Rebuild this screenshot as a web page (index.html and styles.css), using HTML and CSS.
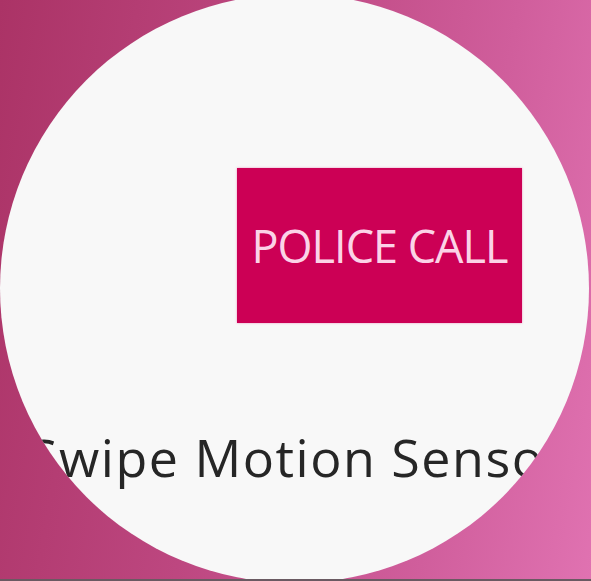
FILE: index.html
```html
<!DOCTYPE html>
<html lang="en">
<head>
<meta charset="utf-8">
<title>Police Call</title>
<link rel="stylesheet" href="styles.css">
</head>
<body>
<div class="screen">
  <div class="stage">
    <div class="dial">
      <div class="btn">POLICE CALL</div>
      <div class="label">Swipe Motion Sensor</div>
    </div>
  </div>
  <div class="strip"></div>
</div>
</body>
</html>
```
FILE: styles.css
```css
html, body {
  margin: 0;
  padding: 0;
  background: #b63f74;
}
.screen {
  width: 591px;
  height: 581px;
  display: flex;
  flex-direction: column;
  overflow: hidden;
  background: linear-gradient(100deg, #ab3366 0%, #bd4780 40%, #d05e9c 75%, #e072b1 100%);
}
.stage {
  height: 579px;
  overflow: hidden;
  flex: none;
}
.strip {
  height: 2px;
  background: #6a5a62;
  flex: none;
}
.dial {
  width: 589px;
  height: 589px;
  margin-top: -6px;
  border-radius: 50%;
  background: #f8f8f8;
  overflow: hidden;
  display: flex;
  flex-direction: column;
  padding-top: 174px;
  box-sizing: border-box;
}
.btn {
  margin-left: 237px;
  width: 285px;
  height: 155px;
  background: #cc0055;
  box-shadow: 0 0 2px rgba(230, 80, 150, 0.6);
  color: #fbd3e7;
  font-family: "Open Sans", sans-serif;
  font-size: 45px;
  letter-spacing: -1px;
  display: flex;
  align-items: center;
  justify-content: center;
  flex: none;
}
.label {
  margin-top: 108px;
  padding-left: 29px;
  font-family: "Open Sans", sans-serif;
  font-size: 52px;
  line-height: 52px;
  letter-spacing: 1.5px;
  color: #262626;
  white-space: nowrap;
}
```
